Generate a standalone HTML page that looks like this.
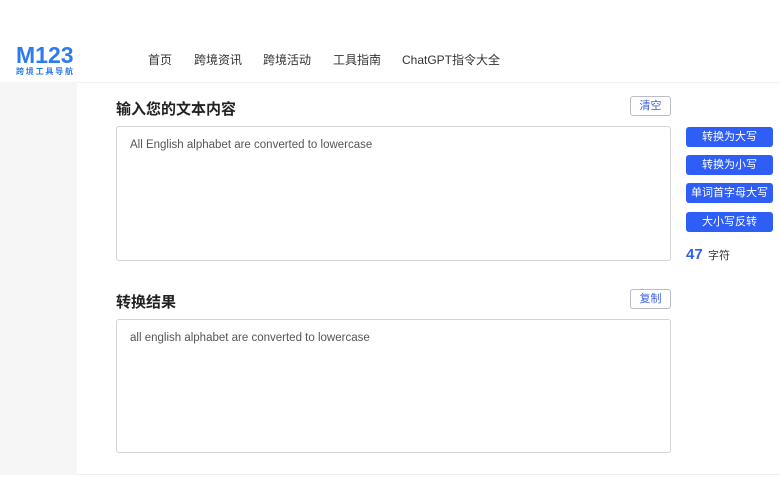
<!DOCTYPE html>
<html><head><meta charset="utf-8"><style>
*{box-sizing:border-box;margin:0;padding:0}
body{width:780px;height:500px;background:#fff;font-family:"Liberation Sans","Noto Sans CJK SC",sans-serif;position:relative;overflow:hidden;color:#333}
.a{position:absolute}
.nav{font-size:12px;color:#333;top:51px}
.gray{left:0;top:82px;width:77px;height:393px;background:#f6f6f6}
.main{left:77px;top:82px;width:703px;height:393px;background:#fff;border-bottom:1px solid #eee;border-top:1px solid #f2f2f2}
.t{font-size:15px;font-weight:bold;color:#222;left:116px}
.ob{width:41px;height:20px;border:1px solid #b8bcc6;border-radius:3px;font-size:11px;color:#3a5fe0;text-align:center;line-height:18px;left:630px}
.ta{left:116px;width:555px;border:1px solid #d4d4d4;border-radius:3px;font-size:11.5px;color:#555;padding:12px 13px}
.bb{left:686px;width:87px;height:20px;background:#2e5ef5;color:#fff;font-size:11px;text-align:center;line-height:20px;border-radius:3px}
</style></head><body>
<div class="a" style="left:16px;top:43px;font-size:23px;font-weight:bold;color:#2e7bf0;letter-spacing:0px;line-height:24px">M123</div>
<div class="a" style="left:16px;top:66px;font-size:8px;color:#2e7bf0;letter-spacing:1.8px;font-weight:bold">跨境工具导航</div>
<div class="a nav" style="left:148px">首页</div>
<div class="a nav" style="left:194px">跨境资讯</div>
<div class="a nav" style="left:263px">跨境活动</div>
<div class="a nav" style="left:333px">工具指南</div>
<div class="a nav" style="left:402px">ChatGPT指令大全</div>
<div class="a gray"></div>
<div class="a main"></div>
<div class="a t" style="top:98px">输入您的文本内容</div>
<div class="a ob" style="top:96px">清空</div>
<div class="a ta" style="top:126px;height:135px">All English alphabet are converted to lowercase</div>
<div class="a bb" style="top:127px">转换为大写</div>
<div class="a bb" style="top:155px">转换为小写</div>
<div class="a bb" style="top:183px">单词首字母大写</div>
<div class="a bb" style="top:212px">大小写反转</div>
<div class="a" style="left:686px;top:246px;font-size:15px;font-weight:bold;color:#2e5ef5">47</div>
<div class="a" style="left:708px;top:247px;font-size:11px;color:#333">字符</div>
<div class="a t" style="top:291px">转换结果</div>
<div class="a ob" style="top:289px">复制</div>
<div class="a ta" style="top:319px;height:134px">all english alphabet are converted to lowercase</div>
</body></html>
